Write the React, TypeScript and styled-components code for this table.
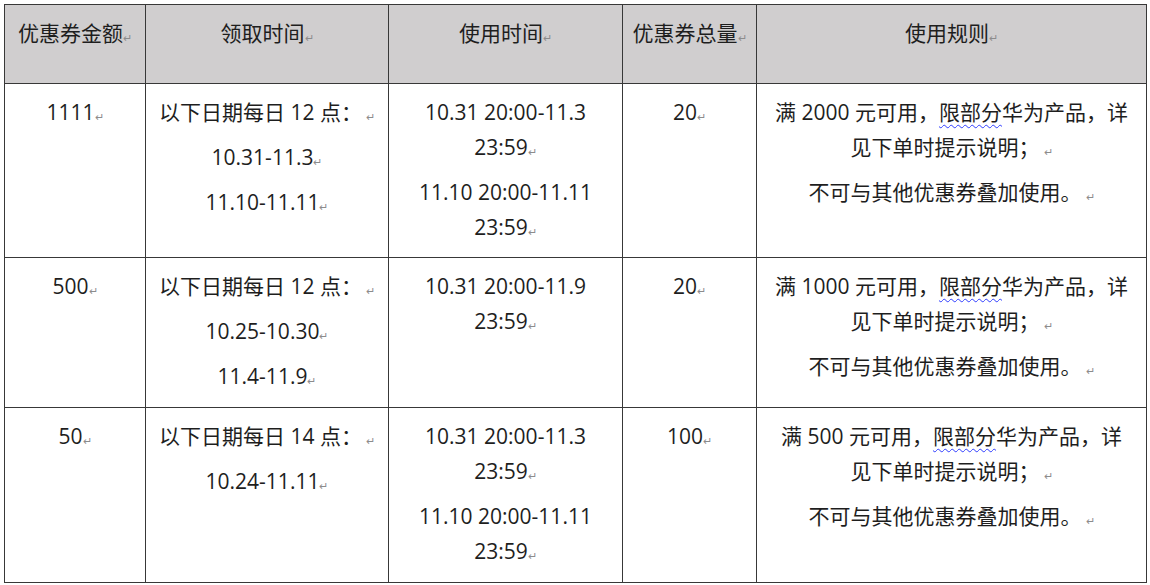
import React, { FC } from "react";
import styled, { createGlobalStyle } from "styled-components";

interface ICoupon {
  amount: string;
  claim: string[];
  use: string[][];
  total: string;
  min: string;
}

const coupons: ICoupon[] = [
  {
    amount: "1111",
    claim: ["以下日期每日 12 点：", "10.31-11.3", "11.10-11.11"],
    use: [
      ["10.31 20:00-11.3", "23:59"],
      ["11.10 20:00-11.11", "23:59"],
    ],
    total: "20",
    min: "2000",
  },
  {
    amount: "500",
    claim: ["以下日期每日 12 点：", "10.25-10.30", "11.4-11.9"],
    use: [["10.31 20:00-11.9", "23:59"]],
    total: "20",
    min: "1000",
  },
  {
    amount: "50",
    claim: ["以下日期每日 14 点：", "10.24-11.11"],
    use: [
      ["10.31 20:00-11.3", "23:59"],
      ["11.10 20:00-11.11", "23:59"],
    ],
    total: "100",
    min: "500",
  },
];

const rowHeights = [174, 150, 175];

const GlobalStyle = createGlobalStyle`
  html, body {
    margin: 0;
    padding: 0;
    background: #ffffff;
  }
  body {
    padding: 4px 0 0 4px;
    font-family: "Open Sans", "Noto Sans CJK SC", sans-serif;
    color: #1e1e1e;
  }
`;

const Table = styled.table`
  border-collapse: collapse;
  table-layout: fixed;
  width: 1142px;
  font-size: 21px;
  line-height: 35px;
`;

const HeadCell = styled.th`
  height: 79px;
  box-sizing: border-box;
  background: #d0cecf;
  border: 1px solid #383838;
  font-weight: 400;
  text-align: center;
  vertical-align: top;
  padding: 11px 0 0 0;
  white-space: nowrap;
`;

const Cell = styled.td<{ $h: number }>`
  height: ${(p) => p.$h}px;
  box-sizing: border-box;
  border: 1px solid #383838;
  text-align: center;
  vertical-align: top;
  padding: 11px 0 0 0;
  white-space: nowrap;
`;

const Para = styled.div`
  margin: 0 0 10px 0;
  &:last-child {
    margin-bottom: 0;
  }
`;

const Mark = styled.span<{ $gap?: boolean }>`
  font-size: 11px;
  line-height: 1;
  color: #8c8c8c;
  margin-left: ${(p) => (p.$gap ? "4px" : "0")};
  vertical-align: -1px;
`;

const Squiggle = styled.span`
  text-decoration: underline wavy #2f3dff;
  text-decoration-thickness: 1px;
  text-underline-offset: 4px;
`;

const Line: FC<{ text: string; gap?: boolean }> = ({ text, gap }) => (
  <Para>
    {text}
    <Mark $gap={gap}>↵</Mark>
  </Para>
);

const headers = ["优惠券金额", "领取时间", "使用时间", "优惠券总量", "使用规则"];

const App: FC = () => {
  return (
    <>
      <GlobalStyle />
      <Table>
        <colgroup>
          <col style={{ width: 141 }} />
          <col style={{ width: 243 }} />
          <col style={{ width: 234 }} />
          <col style={{ width: 134 }} />
          <col style={{ width: 390 }} />
        </colgroup>
        <thead>
          <tr>
            {headers.map((h) => (
              <HeadCell key={h}>
                {h}
                <Mark>↵</Mark>
              </HeadCell>
            ))}
          </tr>
        </thead>
        <tbody>
          {coupons.map((c, i) => (
            <tr key={c.amount}>
              <Cell $h={rowHeights[i]}>
                <Line text={c.amount} />
              </Cell>
              <Cell $h={rowHeights[i]}>
                {c.claim.map((t, j) => (
                  <Line key={t} text={t} gap={j === 0} />
                ))}
              </Cell>
              <Cell $h={rowHeights[i]}>
                {c.use.map((u, j) => (
                  <Para key={j}>
                    {u[0]}
                    <br />
                    {u[1]}
                    <Mark>↵</Mark>
                  </Para>
                ))}
              </Cell>
              <Cell $h={rowHeights[i]}>
                <Line text={c.total} />
              </Cell>
              <Cell $h={rowHeights[i]}>
                <Para>
                  满 {c.min} 元可用，<Squiggle>限部分</Squiggle>华为产品，详
                  <br />
                  见下单时提示说明；<Mark $gap>↵</Mark>
                </Para>
                <Line text="不可与其他优惠券叠加使用。" gap />
              </Cell>
            </tr>
          ))}
        </tbody>
      </Table>
    </>
  );
};

export default App;
